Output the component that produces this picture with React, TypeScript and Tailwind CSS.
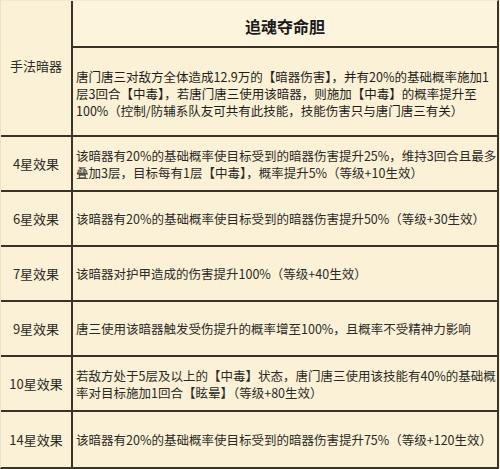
const ROWS: { label: string; lines: string[] }[] = [
  {
    label: "4星效果",
    lines: [
      "该暗器有20%的基础概率使目标受到的暗器伤害提升25%，维持3回合且最多",
      "叠加3层，目标每有1层【中毒】，概率提升5%（等级+10生效）",
    ],
  },
  { label: "6星效果", lines: ["该暗器有20%的基础概率使目标受到的暗器伤害提升50%（等级+30生效）"] },
  { label: "7星效果", lines: ["该暗器对护甲造成的伤害提升100%（等级+40生效）"] },
  { label: "9星效果", lines: ["唐三使用该暗器触发受伤提升的概率增至100%，且概率不受精神力影响"] },
  {
    label: "10星效果",
    lines: [
      "若敌方处于5层及以上的【中毒】状态，唐门唐三使用该技能有40%的基础概",
      "率对目标施加1回合【眩晕】（等级+80生效）",
    ],
  },
  { label: "14星效果", lines: ["该暗器有20%的基础概率使目标受到的暗器伤害提升75%（等级+120生效）"] },
];

export default function App() {
  return (
    <div className="h-[469px] w-[500px] overflow-hidden bg-[#fbf1d6] font-['Noto_Sans_CJK_SC',sans-serif] text-[12.5px] text-[#2b2a26]">
      <div className="grid h-[469px] w-[499px] grid-cols-[72px_1fr] grid-rows-[47px_89px_repeat(6,55px)] border-r-2 border-b-2 border-l border-t border-l-[#ede2c6] border-t-[#f3e9cf] border-r-[#3a3428] border-b-[#3a3428]">
        <div className="row-span-2 flex items-center justify-center border-r-2 border-b-2 border-[#3a3428] pb-1 text-[13px]">
          手法暗器
        </div>
        <div className="flex items-center justify-center border-b-2 border-[#3a3428] bg-[#fcf4dc] pt-1 text-[16px] font-bold text-[#1a1a1a]">
          追魂夺命胆
        </div>
        <div className="flex flex-col justify-center border-b-2 border-[#3a3428] pl-[3px] pt-1 leading-[17px] text-[#1f1e1b]">
          <p className="whitespace-nowrap">唐门唐三对敌方全体造成12.9万的【暗器伤害】，并有20%的基础概率施加1</p>
          <p className="whitespace-nowrap">层3回合【中毒】，若唐门唐三使用该暗器，则施加【中毒】的概率提升至</p>
          <p className="whitespace-nowrap">100%（控制/防辅系队友可共有此技能，技能伤害只与唐门唐三有关）</p>
        </div>
        {ROWS.map((row, i) => {
          const last = i === ROWS.length - 1;
          return (
            <div key={row.label} className="contents">
              <div
                className={`flex items-center justify-center border-r-2 border-[#3a3428] text-[13px] ${last ? "" : "border-b-2"}`}
              >
                {row.label}
              </div>
              <div
                className={`flex flex-col justify-center border-[#3a3428] pl-[3px] leading-[17px] ${last ? "" : "border-b-2"}`}
              >
                {row.lines.map((line) => (
                  <p key={line} className="whitespace-nowrap">
                    {line}
                  </p>
                ))}
              </div>
            </div>
          );
        })}
      </div>
    </div>
  );
}
